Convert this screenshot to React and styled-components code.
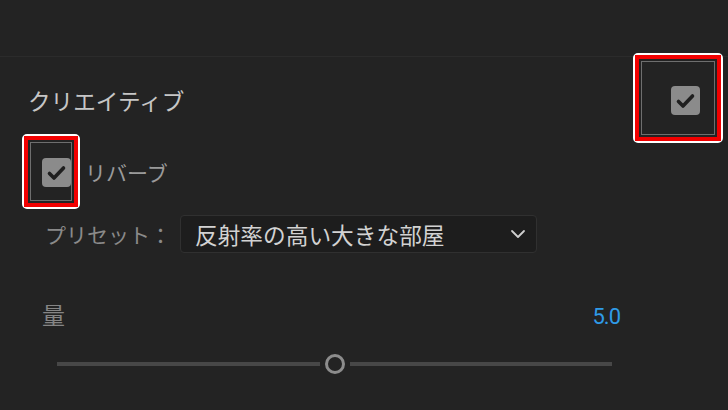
import React from "react";
import styled, { createGlobalStyle } from "styled-components";

const Global = createGlobalStyle`
  html, body {
    margin: 0;
    padding: 0;
    background: #232323;
  }
  body {
    font-family: "Noto Sans CJK JP", "Noto Sans", sans-serif;
  }
`;

const Page = styled.div`
  width: 728px;
  height: 410px;
  overflow: hidden;
  background: #232323;
  display: flex;
  flex-direction: column;
`;

const TopBar = styled.div`
  height: 56px;
  flex-shrink: 0;
  border-bottom: 1px solid #2b2b2b;
`;

const HeaderRow = styled.div`
  display: flex;
  align-items: center;
  justify-content: space-between;
  margin-top: 28px;
  padding: 0 28px;
  height: 30px;
`;

const Title = styled.div`
  font-size: 22.6px;
  line-height: 30px;
  color: #c6c6c6;
  margin-top: 2px;
`;

const CheckWrap = styled.div`
  position: relative;
  width: 29px;
  height: 29px;
  flex-shrink: 0;
`;

const Box = styled.div`
  width: 29px;
  height: 29px;
  border-radius: 4px;
  background: #8b8b8b;
  display: flex;
  align-items: center;
  justify-content: center;
`;

// 注釈の赤枠（チェックボックスの上に重なる）
const Marker = styled.div`
  position: absolute;
  left: ${(p) => p.left}px;
  top: ${(p) => p.top}px;
  width: ${(p) => p.w}px;
  height: ${(p) => p.h}px;
  box-sizing: border-box;
  border: 2px solid #ffffff;
  border-radius: 5px;
  pointer-events: none;
`;

const MarkerRed = styled.div`
  width: 100%;
  height: 100%;
  box-sizing: border-box;
  border: 4px solid #f20000;
  padding: 2px;
`;

const MarkerInner = styled.div`
  width: 100%;
  height: 100%;
  box-sizing: border-box;
  border: 1px solid #6e6e6e;
`;

const ReverbRow = styled.div`
  display: flex;
  align-items: center;
  margin-top: 43px;
  padding-left: 42px;
  gap: 14px;
  height: 29px;
`;

const Label = styled.div`
  font-size: ${(p) => p.size || 21}px;
  line-height: 29px;
  color: ${(p) => p.color || "#9a9a9a"};
  white-space: nowrap;
`;

const PresetRow = styled.div`
  display: flex;
  align-items: center;
  margin-top: 28px;
  padding-left: 45px;
  gap: 9px;
  height: 38px;
`;

const Select = styled.div`
  width: 357px;
  height: 38px;
  box-sizing: border-box;
  background: #1d1d1d;
  border: 1px solid #303030;
  border-radius: 4px;
  display: flex;
  align-items: center;
  justify-content: space-between;
  padding: 0 10px 0 14px;
`;

const SelectText = styled.span`
  font-size: 22.7px;
  color: #d2d2d2;
  white-space: nowrap;
`;

const AmountRow = styled.div`
  display: flex;
  align-items: baseline;
  justify-content: space-between;
  margin-top: 47px;
  padding: 0 108px 0 42px;
  height: 30px;
`;

const Value = styled.span`
  font-family: Roboto, "Noto Sans", sans-serif;
  font-size: 22px;
  color: #2f9be8;
  letter-spacing: -1px;
`;

const Slider = styled.div`
  display: flex;
  align-items: center;
  margin: 24px 0 0 57px;
  width: 555px;
  height: 20px;
  gap: 5px;
`;

const Track = styled.div`
  flex: 1;
  height: 4px;
  background: #474747;
`;

const Thumb = styled.div`
  width: 20px;
  height: 20px;
  box-sizing: border-box;
  border-radius: 50%;
  border: 3px solid #8c8c8c;
  background: #232323;
  flex-shrink: 0;
`;

function Check() {
  return (
    <svg width="29" height="29" viewBox="0 0 29 29">
      <path
        d="M7.5 15.5 L12 20 L21.5 10"
        fill="none"
        stroke="#1f1f1f"
        strokeWidth="3.6"
        strokeLinecap="round"
        strokeLinejoin="round"
      />
    </svg>
  );
}

function CheckBox({ marker }) {
  return (
    <CheckWrap>
      <Box>
        <Check />
      </Box>
      <Marker {...marker}>
        <MarkerRed>
          <MarkerInner />
        </MarkerRed>
      </Marker>
    </CheckWrap>
  );
}

function Chevron() {
  return (
    <svg width="16" height="10" viewBox="0 0 16 10">
      <path
        d="M2 2 L8 8 L14 2"
        fill="none"
        stroke="#cfcfcf"
        strokeWidth="1.8"
        strokeLinecap="round"
        strokeLinejoin="round"
      />
    </svg>
  );
}

export default function App() {
  return (
    <Page>
      <Global />
      <TopBar />
      <HeaderRow>
        <Title>クリエイティブ</Title>
        <CheckBox marker={{ left: -38, top: -33, w: 90, h: 90 }} />
      </HeaderRow>
      <ReverbRow>
        <CheckBox marker={{ left: -20, top: -24, w: 58, h: 75 }} />
        <Label color="#9a9a9a">リバーブ</Label>
      </ReverbRow>
      <PresetRow>
        <Label color="#8a8a8a">プリセット：</Label>
        <Select>
          <SelectText>反射率の高い大きな部屋</SelectText>
          <Chevron />
        </Select>
      </PresetRow>
      <AmountRow>
        <Label size={23} color="#858585">
          量
        </Label>
        <Value>5.0</Value>
      </AmountRow>
      <Slider>
        <Track />
        <Thumb />
        <Track />
      </Slider>
    </Page>
  );
}
